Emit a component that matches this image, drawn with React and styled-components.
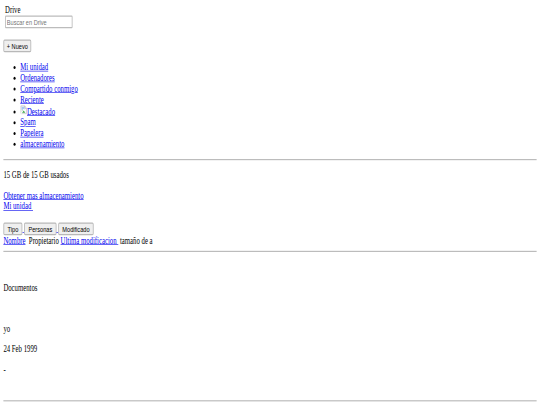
import React from 'react';
import styled, { createGlobalStyle } from 'styled-components';

// the whole page was photographed at 1280x675 and squeezed into 540x405
const GlobalStyle = createGlobalStyle`
  html, body {
    margin: 0;
    padding: 0;
    background: #fff;
    overflow: hidden;
  }
`;

const Viewport = styled.div`
  width: 540px;
  height: 405px;
  overflow: hidden;
`;

const Page = styled.div`
  width: 1264px;
  height: 659px;
  padding: 8px;
  overflow: hidden;
  transform: scale(0.421875, 0.6);
  transform-origin: 0 0;
  font-family: "Liberation Serif", "Times New Roman", serif;
  font-size: 16px;
  color: #000;
`;

const SearchBlock = styled.div`
  padding: 0 0 0 4px;
`;

const SearchInput = styled.input`
  display: block;
  box-sizing: border-box;
  width: 160px;
  height: 21px;
  padding: 1px 2px;
  border: 2px solid #bcbcbc;
  border-radius: 2px;
  background: #fff;
  font: 13.333px "Liberation Sans", Arial, sans-serif;

  &::placeholder {
    color: #757575;
  }
`;

const Button = styled.button`
  box-sizing: border-box;
  height: 21px;
  padding: 1px 6px;
  border: 2px solid #b8b8b8;
  border-radius: 3px;
  background: #efefef;
  color: #000;
  font: 13.333px "Liberation Sans", Arial, sans-serif;
`;

const FilterButton = styled(Button)`
  padding: 1px 8px;
`;

const NewRow = styled.div`
  margin-top: 19px;
`;

const Nav = styled.ul`
  margin: 16px 0;
  padding-left: 40px;
  list-style: disc;
`;

const Link = styled.a`
  color: #00e;
  text-decoration: underline;
`;

const Rule = styled.hr`
  height: 0;
  margin: ${(p) => p.$top || 8}px 0 8px;
  border: 0;
  border-top: 2px solid #bcbcbc;
`;

const Para = styled.p`
  margin: ${(p) => p.$top || 16}px 0 16px;
`;

const Toolbar = styled.div`
  margin-top: 18px;
`;

const BrokenIcon = () => (
  <svg width="16" height="16" viewBox="0 0 16 16">
    <path d="M1.5 1.5h9l4 4v9h-13z" fill="#fff" stroke="#a0a0a0" />
    <path d="M10.5 1.5v4h4" fill="#e8e8e8" stroke="#a0a0a0" />
    <path d="M3 3h7v5H3z" fill="#a9c8f2" />
    <path d="M3 13l3-5 3 2 3 3z" fill="#3fa648" />
    <path d="M1 15L9 7" stroke="#fff" strokeWidth="2" />
  </svg>
);

const navItems = ['Mi unidad', 'Ordenadores', 'Compartido conmigo', 'Reciente'];

export default function App() {
  return (
    <Viewport>
      <GlobalStyle />
      <Page>
        <SearchBlock>
          Drive
          <SearchInput placeholder="Buscar en Drive" />
        </SearchBlock>
        <NewRow>
          <Button>+ Nuevo</Button>
        </NewRow>
        <Nav>
          {navItems.map((item) => (
            <li key={item}><Link href="#">{item}</Link></li>
          ))}
          <li><BrokenIcon /><Link href="#">Destacado</Link></li>
          <li><Link href="#">Spam</Link></li>
          <li><Link href="#">Papelera</Link></li>
          <li><Link href="#">almacenamiento</Link></li>
        </Nav>
        <Rule />
        <Para>15 GB de 15 GB usados</Para>
        <div><Link href="#">Obtener mas almacenamiento</Link></div>
        <div><Link href="#">Mi unidad&nbsp;</Link></div>
        <Toolbar>
          <Link href="#"><FilterButton>Tipo</FilterButton> </Link>
          <Link href="#"><FilterButton>Personas</FilterButton> </Link>
          <FilterButton>Modificado</FilterButton>
        </Toolbar>
        <div>
          <Link href="#">Nombre</Link>&nbsp; Propietario <Link href="#">Ultima modificacion&nbsp;</Link> tamaño de a
        </div>
        <Rule />
        <Para $top={51}>Documentos</Para>
        <Para $top={50}>yo</Para>
        <Para>24 Feb 1999</Para>
        <Para>-</Para>
        <Rule $top={42} />
      </Page>
    </Viewport>
  );
}
